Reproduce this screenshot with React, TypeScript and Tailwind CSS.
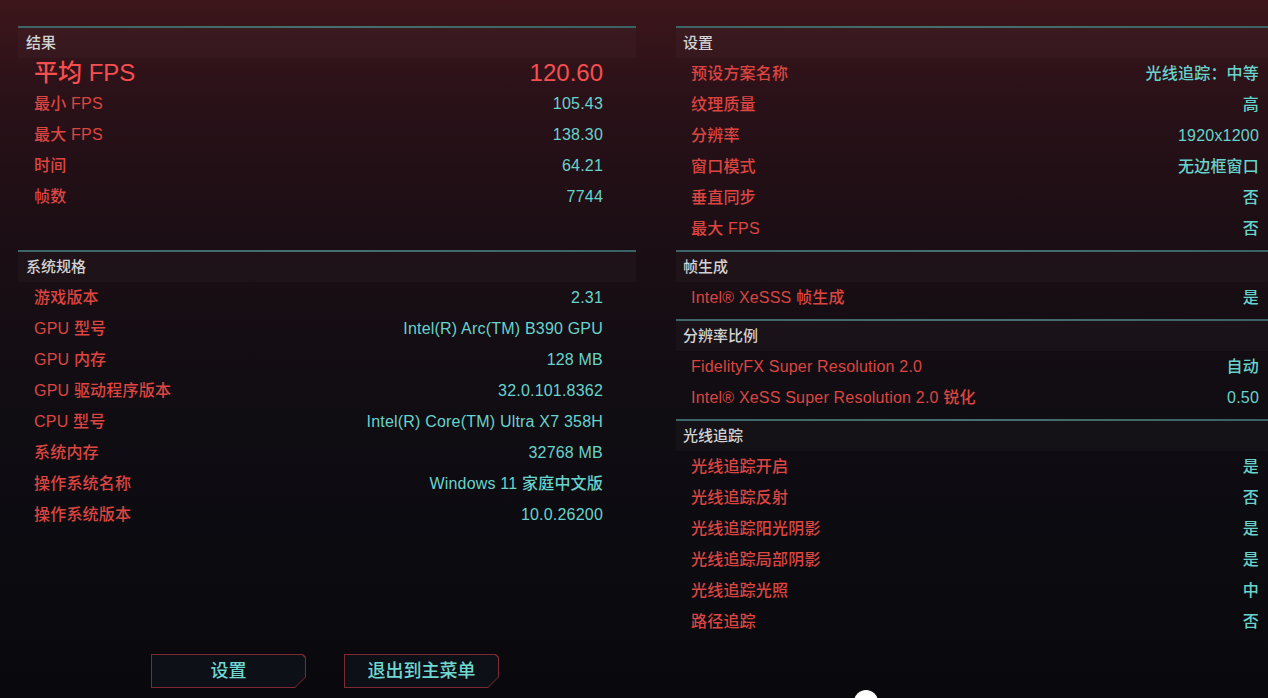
import React from "react";

const font = {
  fontFamily: '"Liberation Sans", "Noto Sans CJK SC", sans-serif',
};

type Row = [string, string];

const results: Row[] = [
  ["最小 FPS", "105.43"],
  ["最大 FPS", "138.30"],
  ["时间", "64.21"],
  ["帧数", "7744"],
];

const specs: Row[] = [
  ["游戏版本", "2.31"],
  ["GPU 型号", "Intel(R) Arc(TM) B390 GPU"],
  ["GPU 内存", "128 MB"],
  ["GPU 驱动程序版本", "32.0.101.8362"],
  ["CPU 型号", "Intel(R) Core(TM) Ultra X7 358H"],
  ["系统内存", "32768 MB"],
  ["操作系统名称", "Windows 11 家庭中文版"],
  ["操作系统版本", "10.0.26200"],
];

const settings: Row[] = [
  ["预设方案名称", "光线追踪：中等"],
  ["纹理质量", "高"],
  ["分辨率", "1920x1200"],
  ["窗口模式", "无边框窗口"],
  ["垂直同步", "否"],
  ["最大 FPS", "否"],
];

const frameGen: Row[] = [["Intel® XeSSS 帧生成", "是"]];

const scaling: Row[] = [
  ["FidelityFX Super Resolution 2.0", "自动"],
  ["Intel® XeSS Super Resolution 2.0 锐化", "0.50"],
];

const rayTracing: Row[] = [
  ["光线追踪开启", "是"],
  ["光线追踪反射", "否"],
  ["光线追踪阳光阴影", "是"],
  ["光线追踪局部阴影", "是"],
  ["光线追踪光照", "中"],
  ["路径追踪", "否"],
];

function Line() {
  return <div className="h-[2px] bg-gradient-to-r from-[#3d6466] via-[#456f70] to-[#3a6264]" />;
}

function Header({ title, indent }: { title: string; indent: string }) {
  return (
    <div className={`h-[30px] flex items-center ${indent} bg-white/[0.025] text-[15px] font-medium text-[#d2d2d2]`}>
      {title}
    </div>
  );
}

function Rows({ rows, labelPad, valuePad }: { rows: Row[]; labelPad: string; valuePad: string }) {
  return (
    <>
      {rows.map(([k, v]) => (
        <div key={k} className={`h-[31px] flex items-center justify-between ${labelPad} ${valuePad} text-[16px] font-medium tracking-[0.2px]`}>
          <span className="text-[#dc4541]">{k}</span>
          <span className="text-[#68d3cc]">{v}</span>
        </div>
      ))}
    </>
  );
}

function Section({ title, rows, right }: { title: string; rows: Row[]; right?: boolean }) {
  return (
    <div className="pb-[6px]">
      <Line />
      <Header title={title} indent={right ? "pl-[7px]" : "pl-[8px]"} />
      <Rows rows={rows} labelPad={right ? "pl-[15px]" : "pl-[16px]"} valuePad={right ? "pr-[9px]" : "pr-[33px]"} />
    </div>
  );
}

function CutButton({ label }: { label: string }) {
  return (
    <div className="w-[155px] h-[34px] p-px bg-[#7c2a31] [clip-path:polygon(0_0,calc(100%-3px)_0,100%_3px,100%_calc(100%-11px),calc(100%-11px)_100%,0_100%)]">
      <div className="w-full h-full flex items-center justify-center bg-[#0d1017] text-[18px] font-medium text-[#6fd8d0] [clip-path:polygon(0_0,calc(100%-3px)_0,100%_3px,100%_calc(100%-10px),calc(100%-10px)_100%,0_100%)]">
        {label}
      </div>
    </div>
  );
}

export default function App() {
  return (
    <div
      style={font}
      className="relative w-[1268px] h-[698px] overflow-hidden bg-[linear-gradient(180deg,#3c161b_0%,#2a1118_14%,#1b0e14_34%,#110d13_55%,#0b0b10_80%,#09090d_100%)]"
    >
      <div className="flex pt-[26px] pl-[18px] gap-[40px]">
        {/* left column */}
        <div className="w-[618px] flex flex-col">
          <div className="h-[224px]">
            <Line />
            <Header title="结果" indent="pl-[8px]" />
            <div className="h-[30px] flex items-center justify-between pl-[16px] pr-[33px] text-[24px] font-medium text-[#f54f4f]">
              <span>平均 FPS</span>
              <span>120.60</span>
            </div>
            <Rows rows={results} labelPad="pl-[16px]" valuePad="pr-[33px]" />
          </div>
          <Section title="系统规格" rows={specs} />
          <div className="flex gap-[38px] pl-[133px] mt-[118px]">
            <CutButton label="设置" />
            <CutButton label="退出到主菜单" />
          </div>
        </div>

        {/* right column */}
        <div className="flex-1 flex flex-col">
          <Section title="设置" rows={settings} right />
          <Section title="帧生成" rows={frameGen} right />
          <Section title="分辨率比例" rows={scaling} right />
          <Section title="光线追踪" rows={rayTracing} right />
        </div>
      </div>

      <div className="absolute left-[854px] top-[690px] w-[24px] h-[24px] rounded-full bg-white" />
    </div>
  );
}
